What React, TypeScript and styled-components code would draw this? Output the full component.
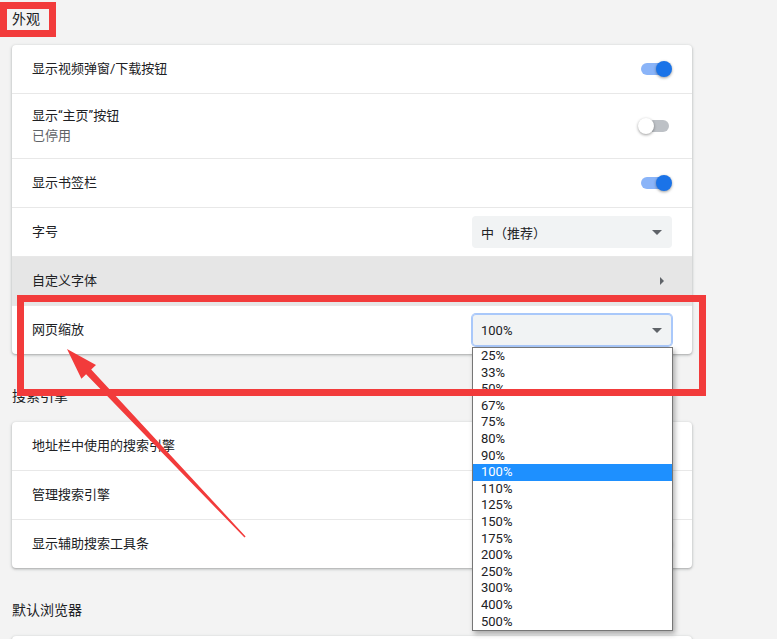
import { FC } from "react";
import styled, { createGlobalStyle, css } from "styled-components";

const GlobalStyle = createGlobalStyle`
  html, body {
    margin: 0;
    background: #f3f3f3;
  }
  body {
    font-family: Roboto, "Noto Sans CJK SC", sans-serif;
    color: #202124;
    font-size: 13px;
  }
`;

const zoomLevels = [
  "25%", "33%", "50%", "67%", "75%", "80%", "90%", "100%", "110%",
  "125%", "150%", "175%", "200%", "250%", "300%", "400%", "500%",
];

const Toggle: FC<{ on?: boolean }> = ({ on }) => (
  <ToggleWrap>
    <ToggleBar on={on} />
    <ToggleKnob on={on} />
  </ToggleWrap>
);

const SelectBox: FC<{ value: string; focused?: boolean; open?: boolean }> = ({
  value,
  focused,
  open,
}) => (
  <SelectWrap focused={focused}>
    <span>{value}</span>
    <DownArrow />
    {open && (
      <OptionList>
        {zoomLevels.map((z) => (
          <OptionItem key={z} selected={z === value}>
            {z}
          </OptionItem>
        ))}
      </OptionList>
    )}
  </SelectWrap>
);

const App = () => {
  return (
    <Page>
      <GlobalStyle />
      <Section>
        <SectionTitle>外观</SectionTitle>
        <Card>
          <Row>
            <Label>显示视频弹窗/下载按钮</Label>
            <Toggle on />
          </Row>
          <Row tall>
            <LabelGroup>
              <Label>显示“主页”按钮</Label>
              <SubLabel>已停用</SubLabel>
            </LabelGroup>
            <Toggle />
          </Row>
          <Row>
            <Label>显示书签栏</Label>
            <Toggle on />
          </Row>
          <Row>
            <Label>字号</Label>
            <SelectBox value="中（推荐）" />
          </Row>
          <Row highlighted>
            <Label>自定义字体</Label>
            <RightArrow />
          </Row>
          <Row>
            <Label>网页缩放</Label>
            <SelectBox value="100%" focused open />
          </Row>
        </Card>
      </Section>

      <Section>
        <SectionTitle>搜索引擎</SectionTitle>
        <Card>
          <Row>
            <Label>地址栏中使用的搜索引擎</Label>
          </Row>
          <Row>
            <Label>管理搜索引擎</Label>
          </Row>
          <Row>
            <Label>显示辅助搜索工具条</Label>
            <Toggle on />
          </Row>
        </Card>
      </Section>

      <Section>
        <SectionTitle>默认浏览器</SectionTitle>
        <Card>
          <Row />
        </Card>
      </Section>

      {/* annotations drawn over the screenshot */}
      <MarkBox left={0} top={2} width={56} height={35} />
      <MarkBox left={17} top={295} width={689} height={101} />
      <ArrowLayer width="777" height="639" viewBox="0 0 777 639">
        <polygon
          points="67,349 96,364.9 91.2,369.4 245.6,536.4 244.5,537.6 86.1,374.2 81.4,378.7"
          fill="#f23b3b"
        />
      </ArrowLayer>
    </Page>
  );
};

export default App;

const Page = styled.div`
  position: relative;
  width: 777px;
  height: 639px;
  overflow: hidden;
  box-sizing: border-box;
  padding: 9px 0 0 12px;
`;

const Section = styled.section`
  width: 680px;
  & + & {
    margin-top: 32px;
  }
`;

const SectionTitle = styled.h2`
  margin: 0 0 16px;
  height: 20px;
  line-height: 20px;
  font-size: 14px;
  font-weight: 400;
  color: #202124;
`;

const Card = styled.div`
  background: #fff;
  border-radius: 4px;
  box-shadow: 0 1px 2px rgba(60, 64, 67, 0.3),
    0 1px 3px 1px rgba(60, 64, 67, 0.12);
`;

const Row = styled.div<{ tall?: boolean; highlighted?: boolean }>`
  display: flex;
  align-items: center;
  justify-content: space-between;
  min-height: ${(p) => (p.tall ? 64 : 48)}px;
  padding: 0 20px;
  & + & {
    border-top: 1px solid #e8e8e8;
  }
  ${(p) =>
    p.highlighted &&
    css`
      background: #e6e6e6;
    `};
`;

const LabelGroup = styled.div`
  display: flex;
  flex-direction: column;
`;

const Label = styled.div`
  font-size: 13px;
  line-height: 20px;
  color: #202124;
`;

const SubLabel = styled.div`
  font-size: 13px;
  line-height: 20px;
  color: #5f6368;
`;

const ToggleWrap = styled.div`
  position: relative;
  width: 34px;
  height: 16px;
`;

const ToggleBar = styled.div<{ on?: boolean }>`
  position: absolute;
  left: 3px;
  top: 2px;
  width: 28px;
  height: 12px;
  border-radius: 6px;
  background: ${(p) => (p.on ? "#8ab4f8" : "#bdc1c6")};
`;

const ToggleKnob = styled.div<{ on?: boolean }>`
  position: absolute;
  top: 0;
  left: ${(p) => (p.on ? 18 : 0)}px;
  width: 16px;
  height: 16px;
  border-radius: 50%;
  background: ${(p) => (p.on ? "#1a73e8" : "#fff")};
  box-shadow: 0 1px 3px rgba(0, 0, 0, 0.4);
`;

const SelectWrap = styled.div<{ focused?: boolean }>`
  position: relative;
  display: flex;
  align-items: center;
  justify-content: space-between;
  width: 200px;
  height: 32px;
  box-sizing: border-box;
  padding: 0 10px 0 9px;
  border-radius: 4px;
  background: #f1f3f4;
  font-size: 13px;
  color: #202124;
  ${(p) =>
    p.focused &&
    css`
      box-shadow: 0 0 0 1px #a9c8fa, inset 0 0 0 1px #a9c8fa;
    `};
`;

const DownArrow = styled.span`
  width: 0;
  height: 0;
  border-left: 5px solid transparent;
  border-right: 5px solid transparent;
  border-top: 5px solid #5f6368;
`;

const RightArrow = styled.span`
  width: 0;
  height: 0;
  margin-right: 8px;
  border-top: 4px solid transparent;
  border-bottom: 4px solid transparent;
  border-left: 4px solid #5f6368;
`;

const OptionList = styled.div`
  position: absolute;
  left: 0;
  top: 33px;
  z-index: 5;
  width: 201px;
  box-sizing: border-box;
  background: #fff;
  border: 1px solid #767676;
  box-shadow: 2px 3px 5px rgba(0, 0, 0, 0.3);
`;

const OptionItem = styled.div<{ selected?: boolean }>`
  height: 16.6px;
  line-height: 16.6px;
  padding-left: 8px;
  font-size: 13px;
  color: ${(p) => (p.selected ? "#fff" : "#202124")};
  background: ${(p) => (p.selected ? "#1e90ff" : "transparent")};
`;

const MarkBox = styled.div<{
  left: number;
  top: number;
  width: number;
  height: number;
}>`
  position: absolute;
  z-index: 10;
  left: ${(p) => p.left}px;
  top: ${(p) => p.top}px;
  width: ${(p) => p.width}px;
  height: ${(p) => p.height}px;
  box-sizing: border-box;
  border: 7px solid #f23b3b;
  pointer-events: none;
`;

const ArrowLayer = styled.svg`
  position: absolute;
  z-index: 11;
  left: 0;
  top: 0;
  pointer-events: none;
`;
